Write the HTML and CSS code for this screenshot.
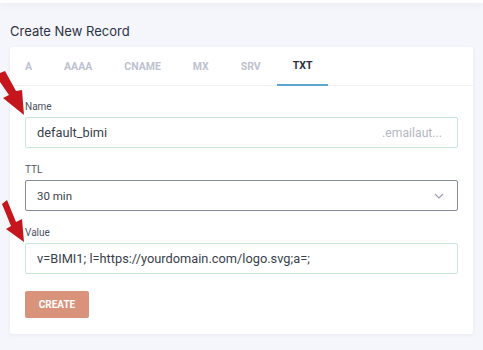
FILE: index.html
```html
<!DOCTYPE html>
<html lang="en">
<head>
    <meta charset="UTF-8">
    <title>Create New Record</title>
    <link rel="stylesheet" href="styles.css">
</head>
<body>
    <div class="top-card"></div>

    <h2 class="section-title">Create New Record</h2>

    <div class="card">
        <div class="tabs">
            <div class="tab">A</div>
            <div class="tab">AAAA</div>
            <div class="tab">CNAME</div>
            <div class="tab">MX</div>
            <div class="tab">SRV</div>
            <div class="tab active">TXT</div>
        </div>

        <form class="record-form">
            <div class="field">
                <label>Name</label>
                <div class="input name-input">
                    <span class="value">default_bimi</span>
                    <span class="suffix">.emailaut...</span>
                </div>
            </div>

            <div class="field">
                <label>TTL</label>
                <div class="input select">
                    <span class="value small">30 min</span>
                    <svg width="10" height="6" viewBox="0 0 10 6" fill="none" stroke="#9a9eab" stroke-width="1.1">
                        <polyline points="1 1 5 5 9 1"></polyline>
                    </svg>
                </div>
            </div>

            <div class="field">
                <label>Value</label>
                <div class="input">
                    <span class="value">v=BIMI1; l=https://yourdomain.com/logo.svg;a=;</span>
                </div>
            </div>

            <button type="button" class="btn-create">CREATE</button>
        </form>
    </div>

    <!-- annotation arrows drawn over the screenshot -->
    <svg class="arrows" width="483" height="350" viewBox="0 0 483 350">
        <polygon fill="#c4161c" points="0,73 5,71 16,91 22,90 24,115 3,98 9,95 0,82"></polygon>
        <polygon fill="#c4161c" points="2,204 7,200 16,222 22,219 24,242 6,229 11,226"></polygon>
    </svg>
</body>
</html>
```

FILE: styles.css
```css
* {
    margin: 0;
    padding: 0;
    box-sizing: border-box;
}

body {
    background: #f5f6fb;
    font-family: 'Roboto', sans-serif;
    width: 483px;
    height: 350px;
    overflow: hidden;
    position: relative;
}

.top-card {
    height: 3px;
    background: #fff;
    box-shadow: 0 2px 6px rgba(40, 50, 90, 0.08);
}

.section-title {
    font-family: 'Inter', 'Roboto', sans-serif;
    font-size: 13px;
    font-weight: 400;
    color: #2d3345;
    margin: 21px 0 0 10px;
    line-height: 15px;
}

.card {
    margin: 8px 10px 0 10px;
    background: #fff;
    border-radius: 3px;
    box-shadow: 0 1px 4px rgba(40, 50, 90, 0.06);
    height: 287px;
}

.tabs {
    display: flex;
    height: 39px;
    border-bottom: 1px solid #f0f1f5;
}

.tab {
    font-size: 10.5px;
    font-weight: 700;
    color: #bcc2d0;
    display: flex;
    align-items: center;
    padding: 0 16px;
}

.tab:first-child {
    padding-left: 15px;
}

.tab.active {
    color: #2b3040;
    border-bottom: 2px solid #5ea6cf;
    margin-bottom: -1px;
}

.record-form {
    padding: 15px 15px 0 15px;
}

.field {
    margin-bottom: 16px;
}

.field label {
    display: block;
    font-size: 10px;
    color: #4c5262;
    margin-bottom: 4px;
    line-height: 12px;
}

.input {
    height: 31px;
    border: 1px solid #c9e7d6;
    border-radius: 2px;
    display: flex;
    align-items: center;
    justify-content: space-between;
    padding: 0 15px 0 11px;
}

.input .value {
    font-size: 12.8px;
    color: #3a3f4c;
}

.input .value.small {
    font-size: 11.5px;
}

.suffix {
    font-size: 12.2px;
    color: #b4b8c2;
}

.select {
    border-color: #868b9b;
    padding-right: 13px;
}

.btn-create {
    margin-top: 1px;
    width: 64px;
    height: 27px;
    background: #d9937b;
    color: #fff;
    border: none;
    border-radius: 2px;
    font-family: 'Roboto', sans-serif;
    font-weight: 700;
    font-size: 10px;
}

.arrows {
    position: absolute;
    top: 0;
    left: 0;
    pointer-events: none;
}
```
